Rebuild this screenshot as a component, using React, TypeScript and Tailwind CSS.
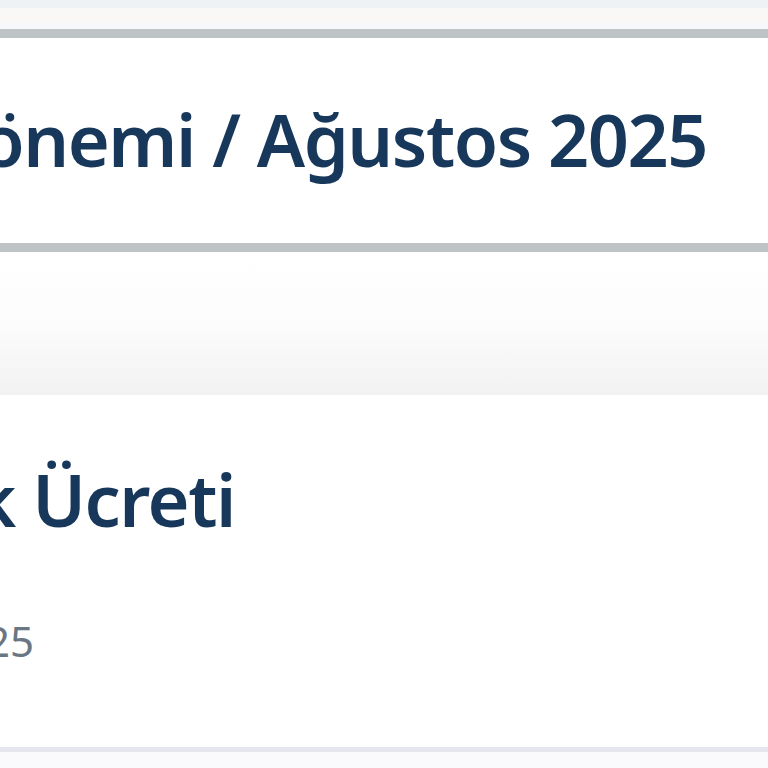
export default function App() {
  const heading = "font-['Noto_Sans',sans-serif] font-[560] text-[72px] leading-none tracking-[-0.02em] text-[#17375b] whitespace-nowrap";
  return (
    <div className="w-[768px] h-[768px] overflow-hidden bg-white flex flex-col">
      {/* top chrome strips */}
      <div className="h-[8px] shrink-0 bg-[#eef2f5]" />
      <div className="h-[14px] shrink-0 bg-[#faf8f7]" />
      <div className="h-[7px] shrink-0 bg-[#f6f8fa]" />

      {/* period header card */}
      <div className="shrink-0 border-y-[9px] border-[#bec3c5] bg-white h-[223px] pt-[65px]">
        <div className="flex justify-end w-[707px]">
          <h1 className={heading}>Fatura Dönemi / Ağustos 2025</h1>
        </div>
      </div>

      {/* section divider shading */}
      <div className="h-[143px] shrink-0 bg-gradient-to-b from-white via-[#fcfcfc] to-[#f2f2f2]" />

      {/* fee item */}
      <div className="h-[352px] shrink-0 bg-white pt-[68px] flex flex-col">
        <div className="flex justify-end w-[235px]">
          <h2 className={heading}>Aylık Ücreti</h2>
        </div>
        <div className="flex justify-end w-[34px] mt-[85px]">
          <span className="font-['Noto_Sans',sans-serif] text-[42px] leading-none text-[#6b7683] whitespace-nowrap">
            15.08.2025
          </span>
        </div>
      </div>
      <div className="h-[5px] shrink-0 bg-[#e6e6ee]" />
      <div className="flex-1 bg-[#fafafc]" />
    </div>
  );
}
